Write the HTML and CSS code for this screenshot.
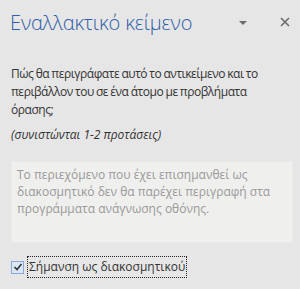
FILE: index.html
```html
<!DOCTYPE html>
<html lang="el">
<head>
    <meta charset="UTF-8">
    <title>Εναλλακτικό κείμενο</title>
    <link rel="stylesheet" href="styles.css">
</head>
<body>
    <div class="pane">
        <div class="head">
            <h1 class="title">Εναλλακτικό κείμενο</h1>
            <span class="menu"></span>
            <svg class="close" width="10" height="10" viewBox="0 0 10 10">
                <path d="M1 1L9 9M9 1L1 9" stroke="#6b6b6b" stroke-width="1.6"/>
            </svg>
        </div>
        <p class="ask">Πώς θα περιγράφατε αυτό το αντικείμενο και το περιβάλλον του σε ένα άτομο με προβλήματα όρασης;</p>
        <p class="hint">(συνιστώνται 1-2 προτάσεις)</p>
        <div class="box">Το περιεχόμενο που έχει επισημανθεί ως διακοσμητικό δεν θα παρέχει περιγραφή στα προγράμματα ανάγνωσης οθόνης.</div>
        <label class="check">
            <span class="tick">
                <svg width="10" height="10" viewBox="0 0 10 10">
                    <path d="M1.5 5L4 7.5L8.5 2" fill="none" stroke="#333" stroke-width="1.6"/>
                </svg>
            </span>
            <span class="label">Σήμανση ως διακοσμητικού</span>
        </label>
    </div>
</body>
</html>
```

FILE: styles.css
```css
body{
    margin: 0;
    background-color: #e6e6e6;
    font-family: "Open Sans", "Noto Sans", sans-serif;
}
.pane{
    width: 300px;
    height: 289px;
    padding: 0 7px 0 11px;
    box-sizing: border-box;
}
.head{
    display: flex;
    align-items: center;
    height: 44px;
}
.title{
    margin: 0 0 0 -1px;
    flex: 1;
    font-size: 20px;
    font-weight: 300;
    color: #2f5ea8;
    letter-spacing: -0.1px;
}
.menu{
    width: 0;
    height: 0;
    border-left: 4px solid transparent;
    border-right: 4px solid transparent;
    border-top: 4px solid #6b6b6b;
    margin-right: 33px;
    margin-top: 1px;
}
.close{
    margin-right: 3px;
}
.ask{
    margin: 21px 0 0;
    font-size: 12px;
    line-height: 18px;
    letter-spacing: -0.45px;
    word-spacing: -0.5px;
    color: #333;
    padding-right: 6px;
}
.hint{
    margin: 7px 0 0;
    font-size: 12px;
    font-style: italic;
    line-height: 18px;
    color: #333;
}
.box{
    margin-top: 17px;
    height: 82px;
    box-sizing: border-box;
    background-color: #efefed;
    border: 1px solid #e9e9e8;
    padding: 4px 8px 0 5px;
    font-size: 12px;
    line-height: 17px;
    color: #999;
}
.check{
    display: flex;
    align-items: center;
    margin-top: 14px;
    font-size: 12px;
    color: #333;
}
.tick{
    width: 11px;
    height: 11px;
    border: 1px solid #8aa7d6;
    background-color: #dbe6f7;
    display: flex;
    align-items: center;
    justify-content: center;
}
.label{
    margin-left: 4px;
    padding: 1px 1px;
    outline: 1px dotted #222;
    line-height: 18px;
}
```
